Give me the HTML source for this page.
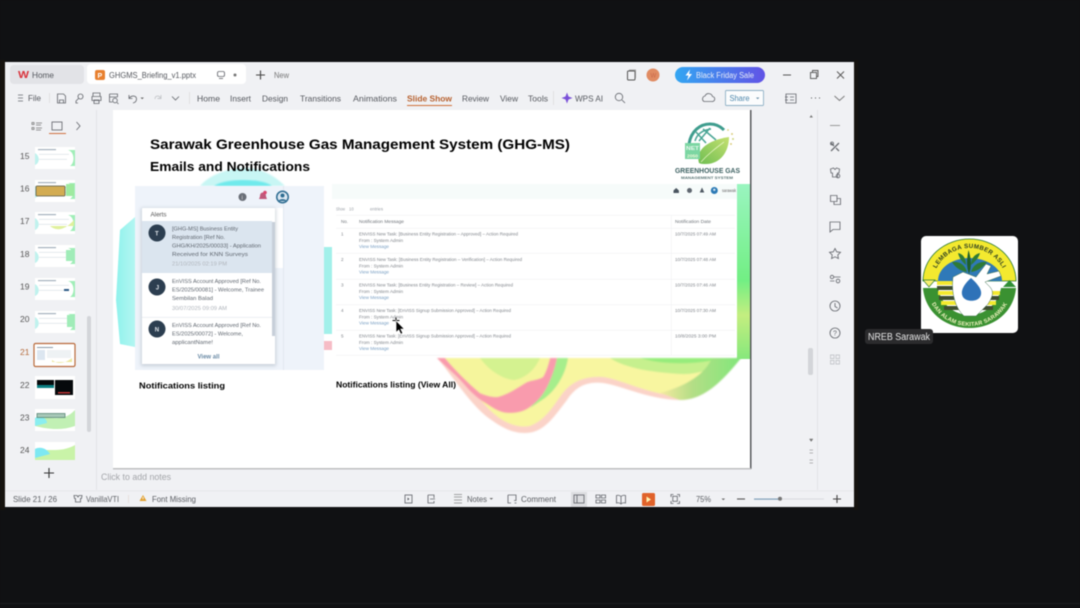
<!DOCTYPE html>
<html lang="en">
<head>
<meta charset="utf-8">
<title>GHGMS_Briefing_v1.pptx</title>
<style>
html,body{margin:0;padding:0;width:1080px;height:608px;overflow:hidden;background:#101113}
svg{display:block;position:absolute;left:0;top:0;filter:blur(.4px)}
text{font-family:"Liberation Sans",Arial,sans-serif}
.ui{font-size:8.5px;fill:#55585e}
.ic{fill:none;stroke:#65686e;stroke-width:.85}
.b{font-weight:bold;fill:#000}
.a{font-size:5.6px;fill:#606770}
.d{font-size:5px;fill:#b0b5bc}
.t{font-size:4.6px;fill:#80858b}
.l{font-size:4.6px;fill:#7ba0c4}
.h{font-size:4.6px;fill:#70757b}
</style>
</head>
<body>
<svg width="1080" height="608" viewBox="0 0 1080 608" xmlns="http://www.w3.org/2000/svg">
<defs>
<linearGradient id="sale" x1="0" x2="1"><stop offset="0" stop-color="#33a6f2"/><stop offset="1" stop-color="#6153e6"/></linearGradient>
<linearGradient id="rg" x1="0" x2="0" y1="0" y2="1"><stop offset="0" stop-color="#9af5c0"/><stop offset=".55" stop-color="#72ef84"/><stop offset=".75" stop-color="#c4ee80"/><stop offset="1" stop-color="#86e87c"/></linearGradient>
<linearGradient id="cy" x1="0" x2="1"><stop offset="0" stop-color="#8ff2ec"/><stop offset="1" stop-color="#b4f6f2"/></linearGradient>
<linearGradient id="lf" x1="0" x2="1" y1="1" y2="0"><stop offset="0" stop-color="#6fbe52"/><stop offset="1" stop-color="#c4e070"/></linearGradient>
<linearGradient id="gr" x1="0" x2="1"><stop offset="0" stop-color="#f6e9a0"/><stop offset=".35" stop-color="#b4de86"/><stop offset="1" stop-color="#76e878"/></linearGradient>
<filter id="soft" x="-5%" y="-5%" width="110%" height="110%"><feGaussianBlur stdDeviation=".9"/></filter>
<filter id="fine" x="-2%" y="-2%" width="104%" height="104%"><feGaussianBlur stdDeviation=".35"/></filter>
<filter id="sh" x="-10%" y="-10%" width="120%" height="120%"><feGaussianBlur stdDeviation="1.800"/></filter>
<clipPath id="clipTh"><rect x="33" y="140" width="44" height="320"/></clipPath>
<clipPath id="tile"><rect x="921" y="236" width="97" height="97" rx="5"/></clipPath>
<clipPath id="slide"><rect x="113" y="110" width="638" height="358"/></clipPath>
<path id="topArc" d="M932.500 285 A37 37 0 0 1 1006.500 285"/>
<path id="botArc" d="M927 285 A42.500 41 0 0 0 1012 285"/>
<g id="th"><rect width="40" height="22" fill="#fff"/><rect x="3" y="2" width="18" height="1.200" fill="#a5b2bc"/><rect x="4" y="7" width="30" height=".6" fill="#d5dde2"/><rect x="4" y="12" width="28" height=".6" fill="#d5dde2"/><path d="M33 3 C40 5 40 16 35 19 L40 19 L40 3Z" fill="#a0eeb8"/><path d="M0 6 C5 9 5 16 0 18Z" fill="#c0f2ee"/></g>
</defs>

<rect width="1080" height="608" fill="#101113"/>
<rect x="0" y="60" width="5" height="450" fill="#16130f"/>
<rect x="854" y="60" width="4" height="450" fill="#15120f"/>
<rect x="0" y="603" width="1080" height="1" fill="#1c1d1f"/>

<!-- Window -->
<rect x="5" y="62" width="849" height="445" fill="#f0f1f4"/>

<!-- Tab bar -->
<rect x="10" y="65" width="74" height="19" rx="4" fill="#e2e3e7"/>
<text x="18" y="78" font-size="10" font-weight="bold" fill="#d9333c" textLength="11" lengthAdjust="spacingAndGlyphs">W</text>
<text x="32" y="78" class="ui" textLength="22" lengthAdjust="spacingAndGlyphs">Home</text>
<rect x="87" y="64" width="159" height="20" rx="4" fill="#fff"/>
<rect x="95" y="70" width="10" height="10" rx="2" fill="#e8802f"/>
<text x="97.500" y="78" font-size="7" font-weight="bold" fill="#fff">P</text>
<text x="109" y="78" class="ui" textLength="87" lengthAdjust="spacingAndGlyphs">GHGMS_Briefing_v1.pptx</text>
<rect x="217.500" y="71.500" width="7" height="5" rx="1.500" class="ic"/>
<path d="M219 78.500h4" class="ic"/>
<circle cx="235" cy="75" r="1.500" fill="#777"/>
<path d="M256 75h9M260.500 70.500v9" stroke="#444" stroke-width="1.100" fill="none"/>
<text x="274" y="78" font-size="8" fill="#777" textLength="15" lengthAdjust="spacingAndGlyphs">New</text>

<rect x="627.500" y="71" width="7.500" height="9" rx="1" fill="none" stroke="#555" stroke-width="1"/>
<path d="M629 70h6.500v8" fill="none" stroke="#888" stroke-width=".8"/>
<circle cx="653" cy="75" r="6.500" fill="#e08b62"/>
<text x="650.500" y="77.500" font-size="6" fill="#c9694a">W</text>
<rect x="675" y="67" width="90" height="16" rx="8" fill="url(#sale)"/>
<path d="M690 69.500l-4.500 6h3l-1.500 5 5-6.500h-3z" fill="#fff"/>
<text x="696" y="78" font-size="8" fill="#e8ecf8" textLength="58" lengthAdjust="spacingAndGlyphs">Black Friday Sale</text>
<path d="M783 75h8" stroke="#555" stroke-width="1"/>
<rect x="810.500" y="72.500" width="6" height="6" fill="none" stroke="#555" stroke-width=".9"/>
<path d="M812.500 72.500v-2h5.500v6h-1.500" fill="none" stroke="#555" stroke-width=".9"/>
<path d="M837 71.500l7 7M844 71.500l-7 7" stroke="#555" stroke-width=".9"/>

<!-- Ribbon -->
<path d="M18 95h5M18 98h5M18 101h5" class="ic"/>
<text x="28" y="101" class="ui" textLength="13" lengthAdjust="spacingAndGlyphs">File</text>
<path d="M49.500 93v10" stroke="#ddd" stroke-width=".8"/>
<path d="M57.500 94h6l2 2v7h-8zM59.500 100h4v3h-4z" class="ic"/>
<circle cx="80.500" cy="96.500" r="2.500" class="ic"/><path d="M78.500 98.500l-2.500 2.500v2h2" class="ic"/>
<path d="M93 96v-3h7v3M92 96.500h9v4h-9zM94 100h5v3.500h-5z" class="ic"/>
<path d="M109.500 94h8v3M109.500 94v8h3M109.500 97h8" class="ic"/><circle cx="115" cy="100.500" r="2.300" class="ic"/><path d="M117 102.500l1.500 1.500" class="ic"/>
<path d="M129 95v3.500h3.500M129.500 98c2-3 7-2.500 7 1 0 2-1.500 3.500-3.500 4" class="ic"/>
<path d="M140.500 97.500l1.700 1.800 1.700-1.800" fill="#666"/>
<path d="M161 95v3.500h-3.500M160.500 98c-1.500-3-5.500-2.500-5.500 1" fill="none" stroke="#c4c6ca" stroke-width=".9"/>
<path d="M172 96.500l3.500 3.500 3.500-3.500" class="ic"/>
<path d="M189.500 92v12" stroke="#ddd" stroke-width=".8"/>
<g class="ui">
<text x="197" y="101.500" textLength="23" lengthAdjust="spacingAndGlyphs">Home</text>
<text x="230" y="101.500" textLength="21" lengthAdjust="spacingAndGlyphs">Insert</text>
<text x="262" y="101.500" textLength="26" lengthAdjust="spacingAndGlyphs">Design</text>
<text x="300" y="101.500" textLength="41" lengthAdjust="spacingAndGlyphs">Transitions</text>
<text x="353" y="101.500" textLength="44" lengthAdjust="spacingAndGlyphs">Animations</text>
<text x="462" y="101.500" textLength="27" lengthAdjust="spacingAndGlyphs">Review</text>
<text x="500" y="101.500" textLength="18" lengthAdjust="spacingAndGlyphs">View</text>
<text x="528" y="101.500" textLength="20" lengthAdjust="spacingAndGlyphs">Tools</text>
<text x="575" y="101.500" textLength="28" lengthAdjust="spacingAndGlyphs">WPS AI</text>
</g>
<text x="407" y="101.500" font-size="8.500" font-weight="bold" fill="#b7612f" textLength="45" lengthAdjust="spacingAndGlyphs">Slide Show</text>
<rect x="407" y="105" width="45" height="1" fill="#d0713a"/>
<path d="M553.500 91v14" stroke="#ddd" stroke-width=".8"/>
<path d="M567 92.500l1.500 4 4 1.500-4 1.500-1.500 4-1.500-4-4-1.500 4-1.500z" fill="#7a50d8"/>
<circle cx="619" cy="97" r="3.700" class="ic"/><path d="M622 100l3 3" class="ic"/>
<path d="M704 101.500h8a2.500 2.500 0 0 0 .5-5 4 4 0 0 0-7.500-.5 3 3 0 0 0-1 5.500z" class="ic"/>
<rect x="725.500" y="90.500" width="38" height="15" rx="1" fill="#fbfcfd" stroke="#8fb1c6" stroke-width=".9"/>
<text x="729.500" y="101" font-size="8" fill="#4d87ac" textLength="20" lengthAdjust="spacingAndGlyphs">Share</text>
<path d="M756 97.500l1.700 1.700 1.700-1.700" fill="#6a8fa8"/>
<path d="M786 94h10v9h-10zM785 97h3M785 100h3M790 97h4M790 100h4" class="ic"/>
<path d="M811 98h1M815 98h1M819 98h1" stroke="#555" stroke-width="1"/>
<path d="M834.500 96l5 4.500 5-4.500" fill="none" stroke="#777" stroke-width=".9"/>

<!-- Left panel -->
<path d="M96.500 110v380" stroke="#e2e3e7" stroke-width="1"/>
<path d="M32 122.500h2v2h-2zM32 127.500h2v2h-2zM36 123h6M36 125h5M36 128h6M36 130h5" stroke="#777" stroke-width=".8" fill="none"/>
<rect x="52" y="122" width="10" height="8" class="ic"/>
<rect x="49" y="133" width="17" height="1" fill="#d07140"/>
<path d="M76.500 122l3.500 4-3.500 4" class="ic"/>

<g font-size="8.500" fill="#555">
<text x="20" y="159">15</text><text x="20" y="191.500">16</text><text x="20" y="224">17</text>
<text x="20" y="257">18</text><text x="20" y="289.500">19</text><text x="20" y="322">20</text>
<text x="20" y="355" fill="#b56a3a">21</text><text x="20" y="388">22</text><text x="20" y="420.500">23</text><text x="20" y="453">24</text>
</g>
<g clip-path="url(#clipTh)">
<use href="#th" x="35" y="147"/>
<use href="#th" x="35" y="180"/><rect x="36" y="186" width="29" height="10" rx="1" fill="#d3ac52" stroke="#5a5a48" stroke-width=".8"/><path d="M66 184h8v12h-8z" fill="#9eeaa0"/>
<use href="#th" x="35" y="212"/><path d="M50 226c6 5 14 5 24-6v6h-24z" fill="#e0f09c"/>
<use href="#th" x="35" y="245"/><path d="M66 250h9v11h-9z" fill="#a0ecb8"/>
<use href="#th" x="35" y="278"/><rect x="64" y="289" width="5" height="2" fill="#2b5a86"/>
<use href="#th" x="35" y="311"/><path d="M67 315h8v12h-8z" fill="#a0ecb8"/>
<rect x="34" y="343.500" width="41" height="23" rx="1.500" fill="#fff" stroke="#b86a3a" stroke-width="1.200"/>
<rect x="37" y="347" width="16" height="1" fill="#8a9aa8"/><rect x="37" y="350" width="8" height="10" fill="#dce6f0"/><rect x="47" y="350" width="24" height="8" fill="#eef2f4"/><path d="M52 360c6 5 14 3 20-2v4h-20z" fill="#ece79a"/>
<rect x="35" y="376" width="40" height="23" fill="#fff"/><rect x="37" y="380" width="17" height="8" fill="#06090c"/><rect x="55" y="380" width="18" height="15" fill="#06090c"/><rect x="37" y="385" width="17" height="3" fill="#0b7f83"/><rect x="58" y="392" width="12" height="1.500" fill="#b33"/>
<rect x="35" y="409" width="40" height="22" fill="#fff"/><path d="M35 420c10-8 25 6 40-10v16c-14 5-28 3-40 0z" fill="#c1f0b4"/><path d="M35 418c5-3 12 0 12 5l-12 3z" fill="#8aeef0"/><rect x="37" y="413.500" width="28" height="4" fill="#a8c8b8" stroke="#4a7a6a" stroke-width=".7"/>
<rect x="35" y="442" width="40" height="18" fill="#fff"/><path d="M35 452c8-5 25 2 40-7v15h-40z" fill="#c9f3a8"/><path d="M35 449c6-3 12 0 15 5l-15 4z" fill="#7ee8f2"/>
</g>
<path d="M44 473h10M49 468v10" stroke="#333" stroke-width="1.100"/>
<rect x="87" y="316" width="4" height="116" rx="2" fill="#d3d5d9"/>

<!-- Slide -->
<rect x="113" y="110" width="638" height="358" fill="#fff"/>
<g clip-path="url(#slide)">
<!-- background shapes -->
<path d="M200 186C210 174 230 168 245 168C262 168 275 176 285 186Z" fill="#c8f6f4" filter="url(#soft)"/>
<path d="M214 186C225 178 262 178 272 186Z" fill="#70eaec" filter="url(#soft)"/>
<path d="M135 217L120 230L116 300L120 344L135 347Z" fill="url(#cy)"/>

<!-- wave -->
<g filter="url(#soft)">
<path d="M437 358C450 372 470 405 490 419C505 430 515 433 525 433C545 433 555 415 567 400C575 388 585 381 603 383C620 385 650 400 680 400C705 400 725 380 751 345V330H737V358Z" fill="#fbd3c8"/>
<path d="M445 358C460 375 475 395 490 410C505 425 520 428 530 426C545 420 552 408 562 394C572 381 585 376 603 377C620 379 650 395 680 396C700 396 715 380 737 358Z" fill="#f8f6a0"/>
<path d="M610 358C625 368 650 372 680 374C700 375 720 366 737 358Z" fill="#c6f08e"/>
<path d="M640 358C660 364 690 366 725 358Z" fill="#96ec7c"/>
<path d="M680 400C705 400 725 380 751 345V335L737 358L712 358C706 372 690 385 660 393Z" fill="url(#gr)"/>
<path d="M557 358H568C566 372 558 388 545 398L530 408C545 392 553 375 557 358Z" fill="#a6ee8c"/>
<path d="M437 358C445 366 455 374 463 383C472 394 480 400 487 404C497 411 503 413 510 413C518 413 525 411 530 407C538 401 543 395 547 387C552 377 555 368 557 358H550C548 366 546 372 543 377C538 380 532 380 527 382C517 388 507 395 497 397C490 397 485 395 480 393C468 383 455 370 445 358Z" fill="#f99bad"/>
<path d="M445 358C455 370 468 383 480 393C485 395 490 397 497 397C507 395 517 388 527 382C532 380 538 380 543 377C546 372 548 366 550 358Z" fill="#f5f59c"/>
<path d="M480 358C490 372 505 380 515 380C525 378 535 370 540 358Z" fill="#d4f290"/>
</g>
<rect x="737" y="184" width="14" height="175" fill="url(#rg)"/>
<rect x="324" y="247" width="8" height="87" fill="#a2f0ea"/>
<rect x="324" y="341" width="8" height="9" fill="#f6bcc6"/>

<!-- left image -->
<rect x="135" y="186" width="189" height="184" fill="#eef3fa"/>
<rect x="275" y="208" width="8" height="60" fill="#fff"/>
<rect x="283" y="186" width="1" height="184" fill="#e2e8f0"/>
<circle cx="242.500" cy="197" r="4" fill="#6a6f78"/><text x="241.500" y="199.500" font-size="6" fill="#ddd">i</text>
<path d="M263 192.500c-2.500 0-3 2-3 4l-1 2.500h8l-1-2.500c0-2-.5-4-3-4z" fill="#c05a7c"/>
<circle cx="265" cy="192.500" r="1.800" fill="#d94870"/>
<circle cx="282.500" cy="197" r="6.500" fill="#2f6d92"/><circle cx="282.500" cy="197" r="5" fill="#dce8f2"/><circle cx="282.500" cy="195.500" r="2" fill="#2f6d92"/><path d="M278.500 201c1-2.500 7-2.500 8 0" fill="#2f6d92"/>
<rect x="141" y="208" width="135" height="158" fill="#9aa4b0" opacity=".45" filter="url(#sh)"/>
<rect x="142" y="208" width="133" height="156" rx="1" fill="#fff"/>
<text x="150.500" y="216.500" font-size="6" fill="#555" textLength="16" lengthAdjust="spacingAndGlyphs">Alerts</text>
<rect x="142" y="221" width="130" height="52" fill="#dbe5ef"/>
<rect x="272" y="222" width="3" height="114" fill="#c7cfd9"/>
<circle cx="157" cy="233" r="8.500" fill="#2c3e50"/><text x="155" y="235.500" font-size="6" font-weight="bold" fill="#dfe5ea">T</text>
<circle cx="157" cy="287" r="8.500" fill="#2c3e50"/><text x="155.800" y="289.500" font-size="6" font-weight="bold" fill="#dfe5ea">J</text>
<circle cx="157" cy="329" r="8.500" fill="#2c3e50"/><text x="154.800" y="331.500" font-size="6" font-weight="bold" fill="#dfe5ea">N</text>
<g filter="url(#fine)">
<text x="172" y="230.500" class="a" textLength="66" lengthAdjust="spacingAndGlyphs">[GHG-MS] Business Entity</text>
<text x="172" y="239" class="a" textLength="53" lengthAdjust="spacingAndGlyphs">Registration [Ref No.</text>
<text x="172" y="247.500" class="a" textLength="89" lengthAdjust="spacingAndGlyphs">GHG/KH/2025/00033] - Application</text>
<text x="172" y="256" class="a" textLength="76" lengthAdjust="spacingAndGlyphs">Received for KNN Surveys</text>
<text x="172" y="265.500" class="d" textLength="55" lengthAdjust="spacingAndGlyphs">21/10/2025 02:19 PM</text>
<text x="172" y="283" class="a" textLength="89" lengthAdjust="spacingAndGlyphs">EnVISS Account Approved [Ref No.</text>
<text x="172" y="291.500" class="a" textLength="92" lengthAdjust="spacingAndGlyphs">ES/2025/00081] - Welcome, Trainee</text>
<text x="172" y="300" class="a" textLength="41" lengthAdjust="spacingAndGlyphs">Sembilan Balad</text>
<text x="172" y="310" class="d" textLength="55" lengthAdjust="spacingAndGlyphs">30/07/2025 09:09 AM</text>
<text x="172" y="327" class="a" textLength="89" lengthAdjust="spacingAndGlyphs">EnVISS Account Approved [Ref No.</text>
<text x="172" y="335.500" class="a" textLength="71" lengthAdjust="spacingAndGlyphs">ES/2025/00072] - Welcome,</text>
<text x="172" y="344" class="a" textLength="41" lengthAdjust="spacingAndGlyphs">applicantName!</text>
</g>
<rect x="142" y="317" width="130" height=".7" fill="#e5e8ec"/>
<rect x="142" y="348" width="133" height="16" fill="#fff"/>
<text x="197.500" y="358.500" font-size="6.500" font-weight="bold" fill="#6a8aa5" textLength="22" lengthAdjust="spacingAndGlyphs">View all</text>

<!-- right image -->
<rect x="332" y="184" width="405" height="173" fill="#fff"/>
<rect x="332" y="184" width="405" height="15" fill="#f6fbfa"/>
<path d="M673.500 190.500l2.700-2.500 2.700 2.500v2.500h-5.400z" fill="#4a5560"/>
<circle cx="689.500" cy="190.500" r="2.500" fill="#5f6770"/>
<path d="M702 187.500l2.300 5h-4.600z" fill="#4e5862"/>
<circle cx="714.300" cy="190.500" r="3.500" fill="#2c7ab5"/><circle cx="714.300" cy="189.800" r="1.200" fill="#dce8f2"/>
<text x="722" y="192" font-size="4.300" fill="#666" textLength="14" lengthAdjust="spacingAndGlyphs">sarawak</text>
<g fill="#f0f1f3">
<rect x="336" y="215" width="399" height=".6"/><rect x="336" y="228" width="399" height=".6"/><rect x="336" y="253" width="399" height=".6"/>
<rect x="336" y="279" width="399" height=".6"/><rect x="336" y="304.500" width="399" height=".6"/><rect x="336" y="330" width="399" height=".6"/><rect x="336" y="355" width="399" height=".6"/>
<rect x="671" y="215" width=".6" height="140"/>
</g>
<g filter="url(#fine)">
<text x="336" y="210.500" font-size="4.200" fill="#9a9fa6" textLength="9" lengthAdjust="spacingAndGlyphs">Show</text>
<text x="349" y="210.500" font-size="4.200" fill="#9a9fa6">10</text>
<text x="370" y="210.500" font-size="4.200" fill="#9a9fa6" textLength="13" lengthAdjust="spacingAndGlyphs">entries</text>
<text x="341" y="223" class="h" textLength="7" lengthAdjust="spacingAndGlyphs">No.</text>
<text x="359" y="223" class="h" textLength="45" lengthAdjust="spacingAndGlyphs">Notification Message</text>
<text x="675" y="223" class="h" textLength="36" lengthAdjust="spacingAndGlyphs">Notification Date</text>

<text x="341" y="235.500" class="t">1</text>
<text x="359" y="235.500" class="t" textLength="159" lengthAdjust="spacingAndGlyphs">ENVISS New Task: [Business Entity Registration – Approved] – Action Required</text>
<text x="359" y="242" class="t" textLength="44" lengthAdjust="spacingAndGlyphs">From : System Admin</text>
<text x="359" y="248" class="l" textLength="30" lengthAdjust="spacingAndGlyphs">View Message</text>
<text x="675" y="235.500" class="t" textLength="41" lengthAdjust="spacingAndGlyphs">10/7/2025 07:49 AM</text>

<text x="341" y="261" class="t">2</text>
<text x="359" y="261" class="t" textLength="163" lengthAdjust="spacingAndGlyphs">ENVISS New Task: [Business Entity Registration – Verification] – Action Required</text>
<text x="359" y="267.500" class="t" textLength="44" lengthAdjust="spacingAndGlyphs">From : System Admin</text>
<text x="359" y="273.500" class="l" textLength="30" lengthAdjust="spacingAndGlyphs">View Message</text>
<text x="675" y="261" class="t" textLength="41" lengthAdjust="spacingAndGlyphs">10/7/2025 07:48 AM</text>

<text x="341" y="286.500" class="t">3</text>
<text x="359" y="286.500" class="t" textLength="154" lengthAdjust="spacingAndGlyphs">ENVISS New Task: [Business Entity Registration – Review] – Action Required</text>
<text x="359" y="293" class="t" textLength="44" lengthAdjust="spacingAndGlyphs">From : System Admin</text>
<text x="359" y="299" class="l" textLength="30" lengthAdjust="spacingAndGlyphs">View Message</text>
<text x="675" y="286.500" class="t" textLength="41" lengthAdjust="spacingAndGlyphs">10/7/2025 07:46 AM</text>

<text x="341" y="312" class="t">4</text>
<text x="359" y="312" class="t" textLength="152" lengthAdjust="spacingAndGlyphs">ENVISS New Task: [EnVISS Signup Submission Approved] – Action Required</text>
<text x="359" y="318.500" class="t" textLength="44" lengthAdjust="spacingAndGlyphs">From : System Admin</text>
<text x="359" y="324.500" class="l" textLength="30" lengthAdjust="spacingAndGlyphs">View Message</text>
<text x="675" y="312" class="t" textLength="41" lengthAdjust="spacingAndGlyphs">10/7/2025 07:30 AM</text>

<text x="341" y="337.500" class="t">5</text>
<text x="359" y="337.500" class="t" textLength="152" lengthAdjust="spacingAndGlyphs">ENVISS New Task: [EnVISS Signup Submission Approved] – Action Required</text>
<text x="359" y="344" class="t" textLength="44" lengthAdjust="spacingAndGlyphs">From : System Admin</text>
<text x="359" y="350" class="l" textLength="30" lengthAdjust="spacingAndGlyphs">View Message</text>
<text x="675" y="337.500" class="t" textLength="41" lengthAdjust="spacingAndGlyphs">10/8/2025 3:00 PM</text>
</g>

<!-- titles -->
<text x="150" y="149" class="b" font-size="14" textLength="420" lengthAdjust="spacingAndGlyphs">Sarawak Greenhouse Gas Management System (GHG-MS)</text>
<text x="150" y="171" class="b" font-size="12.500" textLength="160" lengthAdjust="spacingAndGlyphs">Emails and Notifications</text>
<text x="139" y="388.500" class="b" font-size="8.500" textLength="86" lengthAdjust="spacingAndGlyphs">Notifications listing</text>
<text x="336" y="387.500" class="b" font-size="8.500" textLength="120" lengthAdjust="spacingAndGlyphs">Notifications listing (View All)</text>

<!-- GHG logo -->
<path d="M689 144C691 131 700 124 710 124C716 124 720 126 724 130" fill="none" stroke="#3f9d8e" stroke-width="3"/>
<path d="M695 141C697 134 703 130 711 129M703 129L716 140M696 132L706 143M710 128L699 141" fill="none" stroke="#4aa595" stroke-width="1.500"/>
<path d="M699 163C695 150 708 140 729 137C729 152 720 164 706 164C703 164 701 164 699 163Z" fill="url(#lf)"/>
<path d="M701 162C708 154 716 148 724 142" stroke="#e4f4c0" stroke-width=".8" fill="none"/>
<rect x="685" y="143" width="15" height="16" fill="#7bd6a2"/>
<text x="686" y="150" font-size="5.500" font-weight="bold" fill="#eaf8f0" textLength="13" lengthAdjust="spacingAndGlyphs">NET</text>
<text x="687" y="157.500" font-size="4.500" font-weight="bold" fill="#eef8d8" textLength="11" lengthAdjust="spacingAndGlyphs">2050</text>
<circle cx="728" cy="130" r=".9" fill="#dccf80"/><circle cx="732" cy="134" r="1" fill="#dccf80"/><circle cx="733" cy="139" r="1" fill="#cfd880"/><circle cx="731" cy="144" r="1" fill="#dccf80"/>
<text x="675" y="173" font-size="7.300" font-weight="bold" fill="#3d6162" textLength="65" lengthAdjust="spacingAndGlyphs">GREENHOUSE GAS</text>
<text x="681" y="179" font-size="3.800" font-weight="bold" fill="#5a7575" textLength="52" lengthAdjust="spacingAndGlyphs">MANAGEMENT SYSTEM</text>

<!-- cursor -->
<path d="M396 322.500v-5M392.500 320.500h7" stroke="#111" stroke-width="1.100" fill="none"/>
<path d="M396 320.500v12l2.800-2.600 2 4.300 2-1-2-4.100h3.700z" fill="#000" stroke="#fff" stroke-width=".7"/>
</g>
<!-- slide edge shadow -->
<rect x="750" y="110" width="1.500" height="359" fill="#57595c"/>
<rect x="113" y="468" width="638" height="1.500" fill="#bfc0c2"/>

<!-- Notes -->
<text x="101" y="480" font-size="9" fill="#a4a6aa" textLength="70" lengthAdjust="spacingAndGlyphs">Click to add notes</text>
<rect x="5" y="490.500" width="849" height=".7" fill="#e3e4e7"/>

<!-- right strip -->
<path d="M817.500 110v380" stroke="#e2e3e7" stroke-width="1"/>
<path d="M809.500 117.500l1.700-2.500 1.700 2.500z" fill="#777"/>
<rect x="808" y="348" width="5" height="27" rx="2" fill="#d3d5d9"/>
<path d="M809.500 439l1.700 2.500 1.700-2.500zM809.500 450h3.500M809.500 453h3.500M809.500 460h3.500M809.500 463h3.500" fill="#777" stroke="#777" stroke-width=".5"/>
<path d="M830 125.500h10" stroke="#999" stroke-width="1"/>
<path d="M831 143l3 3M836 148l3 3M839 143l-8 8" stroke="#6a6d72" stroke-width="1.300"/><circle cx="832" cy="143.500" r="1.500" class="ic"/>
<path d="M830.500 169l3-1 1.500 1.500 1.500-1.500 3 1-.5 4h-1.500v4h-5v-4h-1.500z" class="ic"/><circle cx="838" cy="176" r="1.800" class="ic"/>
<path d="M830.500 195.500h6.500v6h-6.500zM834 201.500v3h6.500v-6h-3.500" class="ic"/>
<path d="M830 222h10v7.500h-7l-3 2.500z" class="ic"/>
<path d="M835 248.500l1.700 3.300 3.800.5-2.700 2.600.6 3.600-3.400-1.700-3.400 1.700.6-3.600-2.700-2.600 3.800-.5z" class="ic"/>
<path d="M834 277h6.500M830 281h4.500" class="ic"/><circle cx="832" cy="277" r="1.700" class="ic"/><circle cx="838" cy="281" r="1.800" class="ic"/>
<circle cx="835" cy="306" r="5" class="ic"/><path d="M835 303v3.500l2.500 1.500" class="ic"/>
<circle cx="835" cy="333" r="5" class="ic"/><text x="833" y="335.500" font-size="7" fill="#65686e">?</text>
<path d="M830.500 355h3.500v3.500h-3.500zM836 355h3.500v3.500h-3.500zM830.500 360.500h3.500v3.500h-3.500zM836 360.500h3.500v3.500h-3.500z" fill="none" stroke="#c6c8cc" stroke-width=".9"/>

<!-- Status bar -->
<g font-size="8.300" fill="#5c5f64">
<text x="13" y="502" textLength="44" lengthAdjust="spacingAndGlyphs">Slide 21 / 26</text>
<text x="86" y="502" textLength="33" lengthAdjust="spacingAndGlyphs">VanillaVTI</text>
<text x="152" y="502" textLength="44" lengthAdjust="spacingAndGlyphs">Font Missing</text>
<text x="467" y="502" textLength="20" lengthAdjust="spacingAndGlyphs">Notes</text>
<text x="521" y="502" textLength="35" lengthAdjust="spacingAndGlyphs">Comment</text>
<text x="696" y="502" textLength="15" lengthAdjust="spacingAndGlyphs">75%</text>
</g>
<path d="M74 495.500h3l1 1.500 1-1.500h3l-.5 3h-1v3.500h-5v-3.500h-1z" class="ic"/>
<path d="M143 495l3.500 6h-7z" fill="#e0a030"/>
<rect x="142.600" y="497" width=".8" height="2.300" fill="#fff"/>
<path d="M128.500 495v8" stroke="#e6dcd8" stroke-width=".8"/>
<rect x="405" y="495" width="7" height="8" class="ic"/><path d="M407.500 497.500l2 1.500-2 1.500z" fill="#5a5d63"/>
<path d="M428 495h6v3M428 495v8h6v-2M430 499h5" class="ic"/>
<path d="M454 494.500h8M454 497h8M454 500h8M454 503h8" stroke="#888" stroke-width=".7"/>
<path d="M489.500 498l1.800 1.800 1.800-1.800" fill="#666"/>
<path d="M508 495h8v5.500h-2M508 495v8h3M514.500 503h2" class="ic"/>
<rect x="571" y="492" width="16" height="15" fill="#dcdde0"/>
<rect x="574" y="495" width="10" height="8" class="ic"/><path d="M577 495v8" class="ic"/>
<path d="M596 495h4v3h-4zM601.500 495h4v3h-4zM596 500h4v3h-4zM601.500 500h4v3h-4z" class="ic"/>
<path d="M621 496.500c-1-1-3-1.500-4.500-1v7.500c1.500-.5 3.500 0 4.500 1 1-1 3-1.500 4.500-1v-7.500c-1.500-.5-3.500 0-4.500 1zM621 496.500v7" class="ic"/>
<rect x="642" y="493" width="13" height="13" rx="1.500" fill="#e0622a"/>
<path d="M646.500 496.500l4.500 3-4.500 3z" fill="#fff2b0"/>
<path d="M671 497v-2.500h2.500M677 494.500h2.500v2.500M679.500 501v2.500h-2.500M673.500 503.500h-2.500v-2.500" class="ic"/><rect x="672.800" y="496.300" width="4.500" height="5" class="ic"/>
<path d="M721.500 498.500l1.800 1.800 1.800-1.800" fill="#666"/>
<path d="M737 499h8" stroke="#555" stroke-width="1.100"/>
<rect x="754" y="498.500" width="70" height="1" fill="#d8dadd"/>
<rect x="754" y="498.500" width="26" height="1.200" fill="#7fa0b8"/>
<circle cx="780" cy="498.800" r="2" fill="#777"/>
<path d="M833 499h8M837 495v8" stroke="#444" stroke-width="1.100"/>

<!-- Video tile -->
<rect x="921" y="236" width="97" height="97" rx="5" fill="#fff"/>
<g clip-path="url(#tile)">
<path d="M923 281A46.500 42 0 0 1 1016 281Z" fill="#f3e92f" stroke="#2a7a32" stroke-width=".8"/>
<path d="M938 281C938 268 952 258 969.500 258C987 258 1002 268 1002 281Z" fill="#2f79b8"/>
<path d="M923 288C925 312 945 328 969.500 328C994 328 1014 312 1016 288L1001 288C998 304 985 315 969.500 315C954 315 941 304 938 288Z" fill="#3a9131"/>
<g fill="#f3e92f"><rect x="937" y="281" width="17" height="4"/><rect x="938" y="291" width="17" height="4"/><rect x="941" y="301" width="17" height="4"/><rect x="984" y="291" width="16" height="4"/><rect x="981" y="301" width="15" height="4"/></g>
<g fill="#3f4e30"><rect x="937" y="286" width="17" height="4"/><rect x="939" y="296" width="17" height="4"/><rect x="944" y="306" width="15" height="4"/><rect x="984" y="296" width="15" height="4"/><rect x="979" y="306" width="14" height="4"/></g>
<path d="M923 280h12l-6 7z" fill="#f8f070" stroke="#2a7a32" stroke-width=".7"/>
<path d="M1003 287l6.500-7 6.500 7z" fill="#2f8f35"/>
<path d="M953 277C951 292 955 308 964 316L976 316L988 304C993 296 994 292 990 287L985 282L1001 276L999 271L987 274L991 266L986 264L976 277L963 272Z" fill="#fff" stroke="#3a6a4a" stroke-width=".5"/>
<path d="M971 278C980 286 983 292 980 297C977 302 966 302 963 297C960 292 963 285 971 278Z" fill="#2e72b8"/>
<path d="M969 274C966 266 967 258 968.500 250C971 258 972 266 969 274Z" fill="#1f5f2a"/>
<path d="M967 272C960 271 955 267 952 262C960 261 965 265 967 272ZM971 272C978 271 983 267 987 262C979 261 973 265 971 272ZM966 265C961 261 959 257 958 253C963 254 966 258 966 265ZM971 265C976 261 979 257 980 253C975 254 971 258 971 265Z" fill="#2e7a35"/>
<text font-size="6.200" font-weight="bold" fill="#2c3e22" letter-spacing=".35"><textPath href="#topArc" startOffset="50%" text-anchor="middle">LEMBAGA SUMBER ASLI</textPath></text>
<text font-size="5.700" font-weight="bold" fill="#f0f2c0" letter-spacing=".2"><textPath href="#botArc" startOffset="50%" text-anchor="middle">DAN ALAM SEKITAR SARAWAK</textPath></text>
</g>
<rect x="865" y="329" width="68" height="15" rx="3" fill="#2b2b2d"/>
<text x="868" y="340" font-size="10" fill="#e8e8e8" textLength="62" lengthAdjust="spacingAndGlyphs">NREB Sarawak</text>
</svg>
</body>
</html>
